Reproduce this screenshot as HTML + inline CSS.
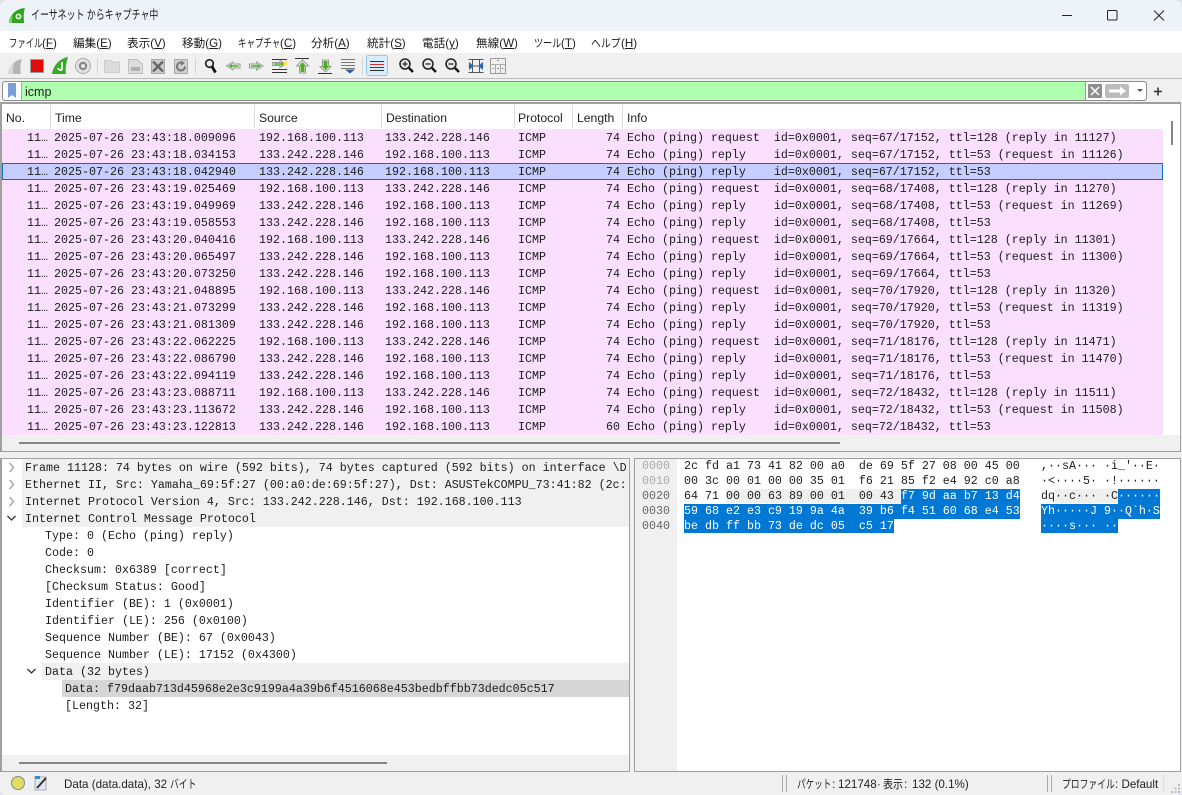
<!DOCTYPE html>
<html><head><meta charset="utf-8"><style>
html,body{margin:0;padding:0;width:1182px;height:795px;overflow:hidden;background:#dfe3e8}
#w{position:absolute;left:0;top:0;width:1182px;height:795px;background:#f0f0f0;border-radius:8px 8px 6px 6px;overflow:hidden;font-family:"Liberation Sans","Noto Sans CJK JP",sans-serif;font-size:12px;color:#1a1a1a}
.a{position:absolute}
.m{position:absolute;top:37px;line-height:14px;font-size:11.6px;white-space:pre}
.k{transform-origin:0 50%}
.st{position:absolute;top:777px;font-size:11.6px;line-height:16px;white-space:pre;color:#222}
.h{position:absolute;top:109px;line-height:18px;font-size:12.2px;color:#222}
.d{position:absolute;top:105px;width:1px;height:23px;background:#dcdcdc}
#l,#dt,.x{font-family:"Liberation Mono",monospace;font-size:11.67px;color:#1c1c1c;white-space:pre}
.r{position:absolute;left:2px;width:1161px;height:17px;background:#fadfff;line-height:17px}
.r span{position:absolute;top:1px}
.n{left:25px}.ti{left:52px}.s{left:257px}.ds{left:383px}.p{left:516px}.le{left:604px}.i{left:625px}
.sel{background:#c5ceff;box-shadow:inset 0 0 0 1px #0a6fc2;}
.q{position:absolute;height:17px;line-height:17px;left:0;width:627px;overflow:hidden}
.q b{font-weight:normal;position:absolute;top:1px}
.gb{position:absolute;height:17px;right:0;background:#f0f0f0}
.x{position:absolute;line-height:15px;height:15px}
.o{color:#666}.o2{color:#aaa}
.bl{background:#0078d4;color:#fff}.gy{background:#efefef}
</style></head><body><div id="w">
<!-- title bar -->
<div class="a" style="left:0;top:0;width:1182px;height:31px;background:#eef3fa"></div>
<div class="a" style="left:0;top:31px;width:1182px;height:22px;background:#fff"></div>
<svg class="a" style="left:8px;top:7px" width="18" height="17" viewBox="0 0 18 17"><path d="M1 16C1 10 6 2 17 1C15 6 16 12 16 16Z" fill="#2ea41e"/><path d="M1 16C2 12 3 9 5 7C4 10 4 13 4 16Z" fill="#7fd06f"/><circle cx="10.5" cy="9.5" r="3" fill="#d8f0d0"/><circle cx="10.5" cy="9.5" r="1.2" fill="#2a8a1e"/></svg>
<div class="a k" style="left:31px;top:7px;font-size:12.5px;line-height:17px;color:#1a1a1a;white-space:pre;transform:scaleX(.715)">イーサネット からキャプチャ中</div>
<svg class="a" style="left:1060px;top:8px" width="110" height="16" viewBox="0 0 110 16" fill="none" stroke="#222" stroke-width="1"><path d="M2 7.5H12"/><rect x="47.5" y="2.5" width="9.5" height="9.5" rx="1"/><path d="M94 2.5L104 12.5M104 2.5L94 12.5"/></svg>
<!-- menu -->
<div class="m k" style="left:9px;transform:scaleX(.72)">ファイル</div><div class="m" style="left:42px">(<u>F</u>)</div>
<div class="m" style="left:73px">編集(<u>E</u>)</div>
<div class="m" style="left:127px">表示(<u>V</u>)</div>
<div class="m" style="left:182px">移動(<u>G</u>)</div>
<div class="m k" style="left:238px;transform:scaleX(.73)">キャプチャ</div><div class="m" style="left:280px">(<u>C</u>)</div>
<div class="m" style="left:311px">分析(<u>A</u>)</div>
<div class="m" style="left:367px">統計(<u>S</u>)</div>
<div class="m" style="left:422px">電話(<u>y</u>)</div>
<div class="m" style="left:476px">無線(<u>W</u>)</div>
<div class="m k" style="left:534px;transform:scaleX(.78)">ツール</div><div class="m" style="left:561px">(<u>T</u>)</div>
<div class="m k" style="left:591px;transform:scaleX(.85)">ヘルプ</div><div class="m" style="left:621px">(<u>H</u>)</div>
<!-- toolbar -->
<svg class="a" style="left:0;top:54px" width="520" height="25" viewBox="0 0 520 25">
<path d="M8 20C9 13 13 7 22 5C20 10 20 16 21 20Z" fill="#b4b4b4"/><path d="M8 20C9 15 11 11 14 9C13 13 13 17 13 20Z" fill="#d8d8d8"/>
<rect x="30.5" y="5.5" width="13" height="13" fill="#e00b0b" stroke="#999"/>
<path d="M52 20C53 13 58 5 68 3C66 10 65 16 66 20Z" fill="#37a829"/><path d="M62 8V16M62 16a3 3 0 0 1-4-2" stroke="#fff" stroke-width="1.600" fill="none"/>
<circle cx="83" cy="12" r="7.500" fill="#e2e2e2" stroke="#aaa"/><circle cx="83" cy="12" r="4.200" fill="#888"/><circle cx="83" cy="12" r="2" fill="#e8e8e8"/>
<rect x="97" y="4" width="1" height="17" fill="#d4d4d4"/>
<path d="M104.500 18.500V6.500H111L113 8H119.500V18.500Z" fill="#dcdcdc" stroke="#ccc"/>
<path d="M128.500 19.500V5.500H137L142.500 10V19.500Z" fill="#dcdcdc" stroke="#c0c0c0"/><rect x="131" y="13" width="9" height="4" fill="#b0b0b0"/>
<rect x="151.500" y="5.500" width="13" height="14" fill="#ccc" stroke="#aaa"/><path d="M153 7.500L163 17.500M163 7.500L153 17.500" stroke="#666" stroke-width="2.400"/>
<rect x="174.500" y="5.500" width="13" height="14" fill="#d0d0d0" stroke="#aaa"/><path d="M185 12.500A4 4 0 1 1 183 9" stroke="#777" stroke-width="2" fill="none"/><path d="M181 6.500L185 9L181 11.500Z" fill="#777"/>
<rect x="195" y="4" width="1" height="17" fill="#d4d4d4"/>
<circle cx="209.500" cy="9.500" r="3.800" fill="#eee" stroke="#222" stroke-width="1.700"/><path d="M212 12.500L215.500 18.500" stroke="#111" stroke-width="2.800"/>
<path d="M240 10H233V8L226.500 12L233 16V14H240Z" fill="#f2f2f2" stroke="#999"/><path d="M238.500 11.200H232V9.800L228.500 12L232 14.200V12.800H238.500Z" fill="#4caf1e"/>
<path d="M249.500 10H256.500V8L263 12L256.500 16V14H249.500Z" fill="#f2f2f2" stroke="#999"/><path d="M251 11.200H257.500V9.800L261 12L257.500 14.200V12.800H251Z" fill="#4caf1e"/>
<path d="M272 5.500H287M272 15.500H287M272 18.500H287" stroke="#333"/><path d="M272.500 8.500H280V6.500L285.500 10L280 13.500V11.500H272.500Z" fill="#f2f2f2" stroke="#999"/><path d="M274 9.300H281V8L284 10L281 12V10.700H274Z" fill="#4caf1e"/><rect x="284" y="8" width="3" height="3" fill="#ffe24a"/>
<path d="M295 4.500H309" stroke="#333"/><path d="M302.500 6L308.500 12H305.500V19H299.500V12H296.500Z" fill="#f4f4f4" stroke="#999"/><path d="M302.500 8L306 12H304.500V18H300.500V12H299Z" fill="#4caf1e"/>
<path d="M318 19.500H332" stroke="#333"/><path d="M325.500 18L331 12.500H328.500V6H322.500V12.500H320Z" fill="#f4f4f4" stroke="#999"/><path d="M325.500 16.500L329 12H327.500V7H323.500V12H322Z" fill="#4caf1e"/>
<path d="M341 5.500H355M341 8.500H355M341 11.500H355M341 14.500H355" stroke="#777"/><path d="M345 15.500H355L350 19.500Z" fill="#2a5fa8"/>
<rect x="362" y="4" width="1" height="17" fill="#d4d4d4"/>
<rect x="366.500" y="1.500" width="21" height="20" rx="2" fill="#d8ecfb" stroke="#90c8f0"/>
<path d="M370 7.500H384" stroke="#333"/><path d="M370 10.500H384" stroke="#c33"/><path d="M370 13.500H384" stroke="#33a"/><path d="M370 16.500H384" stroke="#333"/>
<g fill="#e8e8e8" stroke="#222" stroke-width="1.500"><circle cx="405" cy="10" r="5"/><circle cx="428" cy="10" r="5"/><circle cx="451" cy="10" r="5"/></g>
<path d="M409 14L413 18M432 14L436 18M455 14L459 18" stroke="#111" stroke-width="2.400"/>
<path d="M402.500 10H407.500M405 7.500V12.500M425.500 10H430.500M448.500 10H453.500" stroke="#222" stroke-width="1.200"/>
<path d="M468.500 5.500H483.500M468.500 18.500H483.500M472.500 5V19M479.500 5V19M468.500 12H483.500" stroke="#555"/><path d="M469 8V16L474 12ZM483 8V16L478 12Z" fill="#2a6ab5"/>
<rect x="490.500" y="4.500" width="15" height="15" fill="#f0f0f0" stroke="#999"/><path d="M491 10.500H505M495.500 10.500V19M500.500 10.500V19" stroke="#aaa"/><path d="M497 6.500H499M492.500 14.500H494M497 14.500H499M502 14.500H503.500" stroke="#888"/>
</svg>
<div class="a" style="left:0;top:78px;width:1182px;height:1px;background:#bdbdbd"></div>
<!-- filter -->
<div class="a" style="left:2px;top:81px;width:1143px;height:18px;background:#afffaf;border:1px solid #8e8e8e;border-radius:3px"></div>
<div class="a" style="left:3px;top:82px;width:18px;height:18px;background:#fff;border-right:1px solid #aaa;border-radius:3px 0 0 3px"></div>
<svg class="a" style="left:7px;top:83px" width="11" height="16" viewBox="0 0 11 16"><path d="M1 0H9V15L5 12L1 15Z" fill="#7a9fd4"/></svg>
<div class="a" style="left:25px;top:85px;font-family:'Liberation Sans',sans-serif;font-size:12.5px;line-height:15px;color:#222">icmp</div>
<div class="a" style="left:1085px;top:82px;width:60px;height:18px;background:#fff;border-left:1px solid #999;border-radius:0 3px 3px 0"></div>
<svg class="a" style="left:1087px;top:82px" width="80" height="18" viewBox="0 0 80 18"><rect x="1" y="2" width="14" height="14" rx="1" fill="#8e8e8e"/><path d="M4 5L12 13M12 5L4 13" stroke="#fff" stroke-width="1.500"/><rect x="18" y="2" width="24" height="14" rx="2" fill="#bcbcbc"/><path d="M22 7.500H33V4.500L39 9L33 13.500V10.500H22Z" fill="#fff"/><path d="M50 7H56L53 10Z" fill="#555"/></svg>
<svg class="a" style="left:1153px;top:86px" width="11" height="11" viewBox="0 0 11 11"><path d="M1 5.500H9M5 1.500V9.500" stroke="#333" stroke-width="1.600"/></svg>
<!-- packet list -->
<div class="a" style="left:0;top:102px;width:1181px;height:350px;background:#fff;box-sizing:border-box;border:1px solid #a0a0a0;border-left:2px solid #a0a0a0;border-top:2px solid #a0a0a0"></div>
<div class="a" style="left:2px;top:104px;width:1178px;height:25px;background:#fff"></div>
<div class="h" style="left:6px">No.</div><div class="h" style="left:55px">Time</div><div class="h" style="left:259px">Source</div><div class="h" style="left:386px">Destination</div><div class="h" style="left:518px">Protocol</div><div class="h" style="left:577px">Length</div><div class="h" style="left:627px">Info</div>
<div class="d" style="left:50px"></div><div class="d" style="left:254px"></div><div class="d" style="left:381px"></div><div class="d" style="left:514px"></div><div class="d" style="left:572px"></div><div class="d" style="left:622px"></div>
<div id="l">
<div class="r" style="top:129px"><span class="n">11…</span><span class="ti">2025-07-26 23:43:18.009096</span><span class="s">192.168.100.113</span><span class="ds">133.242.228.146</span><span class="p">ICMP</span><span class="le">74</span><span class="i">Echo (ping) request  id=0x0001, seq=67/17152, ttl=128 (reply in 11127)</span></div>
<div class="r" style="top:146px"><span class="n">11…</span><span class="ti">2025-07-26 23:43:18.034153</span><span class="s">133.242.228.146</span><span class="ds">192.168.100.113</span><span class="p">ICMP</span><span class="le">74</span><span class="i">Echo (ping) reply    id=0x0001, seq=67/17152, ttl=53 (request in 11126)</span></div>
<div class="r sel" style="top:163px"><span class="n">11…</span><span class="ti">2025-07-26 23:43:18.042940</span><span class="s">133.242.228.146</span><span class="ds">192.168.100.113</span><span class="p">ICMP</span><span class="le">74</span><span class="i">Echo (ping) reply    id=0x0001, seq=67/17152, ttl=53</span></div>
<div class="r" style="top:180px"><span class="n">11…</span><span class="ti">2025-07-26 23:43:19.025469</span><span class="s">192.168.100.113</span><span class="ds">133.242.228.146</span><span class="p">ICMP</span><span class="le">74</span><span class="i">Echo (ping) request  id=0x0001, seq=68/17408, ttl=128 (reply in 11270)</span></div>
<div class="r" style="top:197px"><span class="n">11…</span><span class="ti">2025-07-26 23:43:19.049969</span><span class="s">133.242.228.146</span><span class="ds">192.168.100.113</span><span class="p">ICMP</span><span class="le">74</span><span class="i">Echo (ping) reply    id=0x0001, seq=68/17408, ttl=53 (request in 11269)</span></div>
<div class="r" style="top:214px"><span class="n">11…</span><span class="ti">2025-07-26 23:43:19.058553</span><span class="s">133.242.228.146</span><span class="ds">192.168.100.113</span><span class="p">ICMP</span><span class="le">74</span><span class="i">Echo (ping) reply    id=0x0001, seq=68/17408, ttl=53</span></div>
<div class="r" style="top:231px"><span class="n">11…</span><span class="ti">2025-07-26 23:43:20.040416</span><span class="s">192.168.100.113</span><span class="ds">133.242.228.146</span><span class="p">ICMP</span><span class="le">74</span><span class="i">Echo (ping) request  id=0x0001, seq=69/17664, ttl=128 (reply in 11301)</span></div>
<div class="r" style="top:248px"><span class="n">11…</span><span class="ti">2025-07-26 23:43:20.065497</span><span class="s">133.242.228.146</span><span class="ds">192.168.100.113</span><span class="p">ICMP</span><span class="le">74</span><span class="i">Echo (ping) reply    id=0x0001, seq=69/17664, ttl=53 (request in 11300)</span></div>
<div class="r" style="top:265px"><span class="n">11…</span><span class="ti">2025-07-26 23:43:20.073250</span><span class="s">133.242.228.146</span><span class="ds">192.168.100.113</span><span class="p">ICMP</span><span class="le">74</span><span class="i">Echo (ping) reply    id=0x0001, seq=69/17664, ttl=53</span></div>
<div class="r" style="top:282px"><span class="n">11…</span><span class="ti">2025-07-26 23:43:21.048895</span><span class="s">192.168.100.113</span><span class="ds">133.242.228.146</span><span class="p">ICMP</span><span class="le">74</span><span class="i">Echo (ping) request  id=0x0001, seq=70/17920, ttl=128 (reply in 11320)</span></div>
<div class="r" style="top:299px"><span class="n">11…</span><span class="ti">2025-07-26 23:43:21.073299</span><span class="s">133.242.228.146</span><span class="ds">192.168.100.113</span><span class="p">ICMP</span><span class="le">74</span><span class="i">Echo (ping) reply    id=0x0001, seq=70/17920, ttl=53 (request in 11319)</span></div>
<div class="r" style="top:316px"><span class="n">11…</span><span class="ti">2025-07-26 23:43:21.081309</span><span class="s">133.242.228.146</span><span class="ds">192.168.100.113</span><span class="p">ICMP</span><span class="le">74</span><span class="i">Echo (ping) reply    id=0x0001, seq=70/17920, ttl=53</span></div>
<div class="r" style="top:333px"><span class="n">11…</span><span class="ti">2025-07-26 23:43:22.062225</span><span class="s">192.168.100.113</span><span class="ds">133.242.228.146</span><span class="p">ICMP</span><span class="le">74</span><span class="i">Echo (ping) request  id=0x0001, seq=71/18176, ttl=128 (reply in 11471)</span></div>
<div class="r" style="top:350px"><span class="n">11…</span><span class="ti">2025-07-26 23:43:22.086790</span><span class="s">133.242.228.146</span><span class="ds">192.168.100.113</span><span class="p">ICMP</span><span class="le">74</span><span class="i">Echo (ping) reply    id=0x0001, seq=71/18176, ttl=53 (request in 11470)</span></div>
<div class="r" style="top:367px"><span class="n">11…</span><span class="ti">2025-07-26 23:43:22.094119</span><span class="s">133.242.228.146</span><span class="ds">192.168.100.113</span><span class="p">ICMP</span><span class="le">74</span><span class="i">Echo (ping) reply    id=0x0001, seq=71/18176, ttl=53</span></div>
<div class="r" style="top:384px"><span class="n">11…</span><span class="ti">2025-07-26 23:43:23.088711</span><span class="s">192.168.100.113</span><span class="ds">133.242.228.146</span><span class="p">ICMP</span><span class="le">74</span><span class="i">Echo (ping) request  id=0x0001, seq=72/18432, ttl=128 (reply in 11511)</span></div>
<div class="r" style="top:401px"><span class="n">11…</span><span class="ti">2025-07-26 23:43:23.113672</span><span class="s">133.242.228.146</span><span class="ds">192.168.100.113</span><span class="p">ICMP</span><span class="le">74</span><span class="i">Echo (ping) reply    id=0x0001, seq=72/18432, ttl=53 (request in 11508)</span></div>
<div class="r" style="top:418px"><span class="n">11…</span><span class="ti">2025-07-26 23:43:23.122813</span><span class="s">133.242.228.146</span><span class="ds">192.168.100.113</span><span class="p">ICMP</span><span class="le">60</span><span class="i">Echo (ping) reply    id=0x0001, seq=72/18432, ttl=53</span></div>
</div>
<div class="a" style="left:2px;top:435px;width:1178px;height:16px;background:#f0f0f0"></div>
<div class="a" style="left:19px;top:442px;width:821px;height:2px;background:#858585"></div>
<div class="a" style="left:1164px;top:104px;width:16px;height:331px;background:#fff"></div>
<div class="a" style="left:1171px;top:121px;width:2px;height:24px;background:#858585"></div>
<!-- details pane -->
<div class="a" style="left:0;top:458px;width:630px;height:314px;box-sizing:border-box;background:#fff;border:1px solid #a0a0a0;border-left:2px solid #a0a0a0"></div>
<div id="dt" class="a" style="left:0;top:459px;width:629px;height:296px;overflow:hidden">
<div class="gb" style="top:0;left:22px"></div><div class="gb" style="top:17px;left:22px"></div><div class="gb" style="top:34px;left:22px"></div><div class="gb" style="top:51px;left:22px"></div>
<div class="gb" style="top:204px;left:42px"></div><div class="gb" style="top:221px;left:62px;background:#d6d6d6"></div>
<div class="q" style="top:0"><b style="left:25px">Frame 11128: 74 bytes on wire (592 bits), 74 bytes captured (592 bits) on interface \Device</b></div>
<div class="q" style="top:17px"><b style="left:25px">Ethernet II, Src: Yamaha_69:5f:27 (00:a0:de:69:5f:27), Dst: ASUSTekCOMPU_73:41:82 (2c:fd:a1:73</b></div>
<div class="q" style="top:34px"><b style="left:25px">Internet Protocol Version 4, Src: 133.242.228.146, Dst: 192.168.100.113</b></div>
<div class="q" style="top:51px"><b style="left:25px">Internet Control Message Protocol</b></div>
<div class="q" style="top:68px"><b style="left:45px">Type: 0 (Echo (ping) reply)</b></div>
<div class="q" style="top:85px"><b style="left:45px">Code: 0</b></div>
<div class="q" style="top:102px"><b style="left:45px">Checksum: 0x6389 [correct]</b></div>
<div class="q" style="top:119px"><b style="left:45px">[Checksum Status: Good]</b></div>
<div class="q" style="top:136px"><b style="left:45px">Identifier (BE): 1 (0x0001)</b></div>
<div class="q" style="top:153px"><b style="left:45px">Identifier (LE): 256 (0x0100)</b></div>
<div class="q" style="top:170px"><b style="left:45px">Sequence Number (BE): 67 (0x0043)</b></div>
<div class="q" style="top:187px"><b style="left:45px">Sequence Number (LE): 17152 (0x4300)</b></div>
<div class="q" style="top:204px"><b style="left:45px">Data (32 bytes)</b></div>
<div class="q" style="top:221px"><b style="left:65px">Data: f79daab713d45968e2e3c9199a4a39b6f4516068e453bedbffbb73dedc05c517</b></div>
<div class="q" style="top:238px"><b style="left:65px">[Length: 32]</b></div>
</div>
<svg class="a" style="left:5px;top:460px" width="40" height="220" viewBox="0 0 40 220" fill="none" stroke="#999" stroke-width="1.300"><path d="M4.500 3L8.500 7.500L4.500 12M4.500 20L8.500 24.500L4.500 29M4.500 37L8.500 41.500L4.500 46"/><path stroke="#333" d="M2.500 56L6.500 60L10.500 56M22.500 209L26.500 213L30.500 209"/></svg>
<div class="a" style="left:2px;top:755px;width:627px;height:16px;background:#f0f0f0"></div>
<div class="a" style="left:19px;top:762px;width:368px;height:2px;background:#858585"></div>
<!-- hex pane -->
<div class="a" style="left:634px;top:458px;width:547px;height:314px;box-sizing:border-box;background:#fff;border:1px solid #a0a0a0"></div>
<div class="a" style="left:635px;top:459px;width:42px;height:312px;background:#f0f0f0"></div>
<div class="a" style="left:901px;top:489px;width:119px;height:15px;background:#0078d4"></div>
<div class="a" style="left:684px;top:504px;width:336px;height:15px;background:#0078d4"></div>
<div class="a" style="left:684px;top:519px;width:210px;height:14px;background:#0078d4"></div>
<div class="a" style="left:1118px;top:489px;width:42px;height:15px;background:#0078d4"></div>
<div class="a" style="left:1041px;top:504px;width:119px;height:15px;background:#0078d4"></div>
<div class="a" style="left:1041px;top:519px;width:77px;height:14px;background:#0078d4"></div>
<div class="x o2" style="left:642px;top:459px">0000</div><div class="x" style="left:684px;top:459px">2c fd a1 73 41 82 00 a0  de 69 5f 27 08 00 45 00</div><div class="x" style="left:1041px;top:459px">,··sA··· ·i_'··E·</div>
<div class="x o2" style="left:642px;top:474px">0010</div><div class="x" style="left:684px;top:474px">00 3c 00 01 00 00 35 01  f6 21 85 f2 e4 92 c0 a8</div><div class="x" style="left:1041px;top:474px">·&lt;····5· ·!······</div>
<div class="x o" style="left:642px;top:489px">0020</div><div class="x" style="left:684px;top:489px">64 71 <span class="gy">00 00 63 89 00 01  00 43 </span><span class="bl">f7 9d aa b7 13 d4</span></div><div class="x" style="left:1041px;top:489px">dq<span class="gy">··c··· ·C</span><span class="bl">······</span></div>
<div class="x o" style="left:642px;top:504px">0030</div><div class="x" style="left:684px;top:504px"><span class="bl">59 68 e2 e3 c9 19 9a 4a  39 b6 f4 51 60 68 e4 53</span></div><div class="x" style="left:1041px;top:504px"><span class="bl">Yh·····J 9··Q`h·S</span></div>
<div class="x o" style="left:642px;top:519px">0040</div><div class="x" style="left:684px;top:519px"><span class="bl">be db ff bb 73 de dc 05  c5 17</span></div><div class="x" style="left:1041px;top:519px"><span class="bl">····s··· ··</span></div>
<!-- status bar -->
<svg class="a" style="left:10px;top:775px" width="42" height="18" viewBox="0 0 42 18"><circle cx="8" cy="8" r="6.500" fill="#dede62" stroke="#888"/><rect x="25" y="2" width="11" height="13" fill="#dfe9f5" stroke="#aaa"/><path d="M27 13L36 3" stroke="#333" stroke-width="2"/><rect x="25" y="1" width="5" height="3" fill="#3a8ad0"/></svg>
<div class="st" style="left:64px">Data (data.data), 32</div><div class="st k" style="left:170px;transform:scaleX(.76)">バイト</div>
<div class="a" style="left:782px;top:775px;width:1px;height:17px;background:#aaa"></div><div class="a" style="left:786px;top:775px;width:1px;height:17px;background:#aaa"></div>
<div class="st k" style="left:797px;transform:scaleX(.74)">パケット</div><div class="st" style="left:832px">:</div><div class="st" style="left:838px">121748</div><div class="st" style="left:877px">·</div><div class="st k" style="left:883px;transform:scaleX(.86)">表示</div><div class="st" style="left:904px">:</div><div class="st" style="left:912px">132 (0.1%)</div>
<div class="a" style="left:1047px;top:775px;width:1px;height:17px;background:#aaa"></div><div class="a" style="left:1051px;top:775px;width:1px;height:17px;background:#aaa"></div>
<div class="st k" style="left:1062px;transform:scaleX(.76)">プロファイル</div><div class="st" style="left:1115px">: Default</div>
<div class="a" style="left:1163px;top:775px;width:1px;height:17px;background:#ddd"></div>
<svg class="a" style="left:1171px;top:784px" width="10" height="10" viewBox="0 0 10 10" fill="#bbb"><rect x="7" y="0" width="2" height="2"/><rect x="3.500" y="3.500" width="2" height="2"/><rect x="7" y="3.500" width="2" height="2"/><rect x="0" y="7" width="2" height="2"/><rect x="3.500" y="7" width="2" height="2"/><rect x="7" y="7" width="2" height="2"/></svg>
</div></body></html>
